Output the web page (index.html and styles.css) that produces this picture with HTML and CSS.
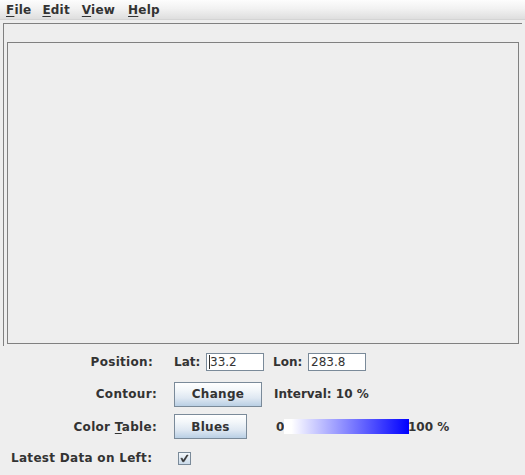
FILE: index.html
```html
<!DOCTYPE html>
<html>
<head>
<meta charset="utf-8">
<link rel="stylesheet" href="styles.css">
</head>
<body>
<div class="menubar">
  <span class="menu m-file"><u>F</u>ile</span>
  <span class="menu m-edit"><u>E</u>dit</span>
  <span class="menu m-view"><u>V</u>iew</span>
  <span class="menu m-help"><u>H</u>elp</span>
</div>
<div class="outer">
  <div class="canvas"></div>
</div>
<div class="form">
  <div class="lbl lbl-pos">Position:</div>
  <div class="ctl">
    <span class="sub lat">Lat:</span>
    <span class="field"><span class="caret"></span>33.2</span>
    <span class="sub lon">Lon:</span>
    <span class="field">283.8</span>
  </div>

  <div class="lbl">Contour:</div>
  <div class="ctl">
    <span class="btn btn-change">Change</span>
    <span class="interval">Interval: 10 %</span>
  </div>

  <div class="lbl">Color <u>T</u>able:</div>
  <div class="ctl">
    <span class="btn btn-blues">Blues</span>
    <span class="zero">0</span>
    <span class="ramp"></span>
    <span class="hundred">100 %</span>
  </div>

  <div class="lbl lbl-latest">Latest Data on Left:</div>
  <div class="ctl">
    <span class="check">
      <svg width="11" height="11" viewBox="0 0 11 11"><path d="M1.8 5.2 L3.6 8.8 L5 8.8 L9.2 2 L7.8 2 L4.3 7.3 L3.3 5.2 Z" fill="#333" stroke="#333" stroke-width="0.5"/></svg>
    </span>
  </div>
</div>
</body>
</html>
```
FILE: styles.css
```css
html, body {
  margin: 0;
  padding: 0;
}
body {
  background: #eeeeee;
  width: 525px;
  height: 475px;
  overflow: hidden;
  font-family: "DejaVu Sans", "Liberation Sans", sans-serif;
  font-size: 12px;
  font-weight: bold;
  color: #333333;
}
u {
  text-decoration: underline;
  text-underline-offset: 2px;
}
.menubar {
  height: 20px;
  display: flex;
  align-items: center;
  background: linear-gradient(#fdfdfd 0%, #f2f2f2 45%, #dedede 100%);
  border-bottom: 1px solid #d4d4d4;
  box-sizing: border-box;
}
.menu {
  line-height: 20px;
  letter-spacing: 0.2px;
}
.m-file { margin-left: 6px; }
.m-edit { margin-left: 11px; }
.m-view { margin-left: 12px; }
.m-help { margin-left: 13px; }

.outer {
  margin: 3px 3px 0 3px;
  border-top: 1px solid #808080;
  border-left: 1px solid #808080;
  padding: 18px 0 2px 3px;
  height: 302px;
}
.canvas {
  width: 510px;
  height: 300px;
  border: 1px solid #808080;
}
.form {
  display: grid;
  grid-template-columns: 157px auto;
  grid-template-rows: 32px 32px 33px 30px;
  column-gap: 17px;
  align-items: center;
}
.lbl {
  justify-self: end;
  white-space: nowrap;
  letter-spacing: 0.3px;
}
.lbl-pos {
  padding-right: 4px;
}
.lbl-latest {
  justify-self: start;
  padding-left: 11px;
}
.ctl {
  display: flex;
  align-items: center;
  white-space: nowrap;
}
.sub.lat { width: 32px; }
.sub.lon { width: 35px; margin-left: 9px; }
.field {
  box-sizing: border-box;
  width: 58px;
  height: 18px;
  background: #ffffff;
  border: 1px solid #7a8a99;
  font-weight: normal;
  color: #333;
  padding-left: 2px;
  line-height: 16px;
  display: flex;
  align-items: center;
}
.caret {
  width: 1px;
  height: 14px;
  background: #333;
}
.btn {
  box-sizing: border-box;
  height: 25px;
  border: 1px solid #7a8a99;
  background: linear-gradient(#ffffff 0%, #f3f7fa 30%, #dfe8f2 65%, #b9cfe4 100%);
  display: flex;
  align-items: center;
  justify-content: center;
  letter-spacing: 0.3px;
}
.btn-change { width: 88px; }
.btn-blues { width: 73px; }
.interval { margin-left: 12px; }
.zero { margin-left: 29px; width: 8px; }
.ramp {
  width: 125px;
  height: 15px;
  background: linear-gradient(to right, #ffffff 0%, #ffffff 6%, #d8d8ff 20%, #0000ff 100%);
}
.hundred { margin-left: -1px; }
.check {
  box-sizing: border-box;
  width: 13px;
  height: 13px;
  margin-left: 4px;
  border: 1px solid #7a8a99;
  background: linear-gradient(#f4f8fb, #cbdbea);
  display: flex;
  align-items: center;
  justify-content: center;
}
.check svg { display: block; }
```
